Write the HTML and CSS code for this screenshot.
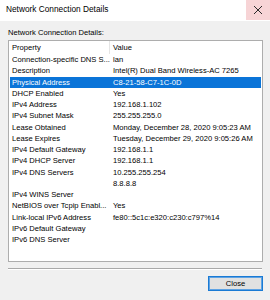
FILE: index.html
```html
<!DOCTYPE html>
<html>
<head>
<meta charset="utf-8">
<link rel="stylesheet" href="styles.css">
</head>
<body>
<div class="window">
  <div class="titlebar">
    <div class="title">Network Connection Details</div>
    <div class="close-x">
      <svg width="10" height="10" viewBox="0 0 10 10"><path d="M1 1 L9 9 M9 1 L1 9" stroke="#2b2b2b" stroke-width="1" fill="none"/></svg>
    </div>
  </div>
  <div class="content">
    <div class="label">Network Connection Details:</div>
    <div class="listbox">
      <div class="header">
        <div class="hcell first">Property</div>
        <div class="hcell">Value</div>
      </div>
      <div class="row"><div class="p">Connection-specific DNS S...</div><div class="v">lan</div></div>
      <div class="row"><div class="p">Description</div><div class="v">Intel(R) Dual Band Wireless-AC 7265</div></div>
      <div class="row selected"><div class="p">Physical Address</div><div class="v">C8-21-58-C7-1C-0D</div></div>
      <div class="row"><div class="p">DHCP Enabled</div><div class="v">Yes</div></div>
      <div class="row"><div class="p">IPv4 Address</div><div class="v">192.168.1.102</div></div>
      <div class="row"><div class="p">IPv4 Subnet Mask</div><div class="v">255.255.255.0</div></div>
      <div class="row"><div class="p">Lease Obtained</div><div class="v">Monday, December 28, 2020 9:05:23 AM</div></div>
      <div class="row"><div class="p">Lease Expires</div><div class="v">Tuesday, December 29, 2020 9:05:26 AM</div></div>
      <div class="row"><div class="p">IPv4 Default Gateway</div><div class="v">192.168.1.1</div></div>
      <div class="row"><div class="p">IPv4 DHCP Server</div><div class="v">192.168.1.1</div></div>
      <div class="row"><div class="p">IPv4 DNS Servers</div><div class="v">10.255.255.254</div></div>
      <div class="row"><div class="p"></div><div class="v">8.8.8.8</div></div>
      <div class="row"><div class="p">IPv4 WINS Server</div><div class="v"></div></div>
      <div class="row"><div class="p">NetBIOS over Tcpip Enabl...</div><div class="v">Yes</div></div>
      <div class="row"><div class="p">Link-local IPv6 Address</div><div class="v">fe80::5c1c:e320:c230:c797%14</div></div>
      <div class="row"><div class="p">IPv6 Default Gateway</div><div class="v"></div></div>
      <div class="row"><div class="p">IPv6 DNS Server</div><div class="v"></div></div>
    </div>
    <div class="separator"></div>
    <div class="actions">
      <button class="btn">Close</button>
    </div>
  </div>
</div>
</body>
</html>
```
FILE: styles.css
```css
html, body {
  margin: 0;
  padding: 0;
}
body {
  width: 270px;
  height: 300px;
  background: #f0f0f0;
  font-family: "Liberation Sans", Arial, sans-serif;
  color: #000;
  overflow: hidden;
}
.window {
  display: flex;
  flex-direction: column;
}
.titlebar {
  height: 21px;
  background: #fff;
  display: flex;
  justify-content: space-between;
  align-items: stretch;
}
.title {
  padding-left: 6px;
  font-size: 8.3px;
  line-height: 19px;
  color: #000;
}
.close-x {
  width: 24px;
  height: 20px;
  background: #f7d4d6;
  display: flex;
  align-items: center;
  justify-content: center;
}
.close-x svg {
  display: block;
  margin-top: -1px;
}
.content {
  padding: 7px 7px 0 8px;
  display: flex;
  flex-direction: column;
}
.label {
  font-size: 7.6px;
  line-height: 10px;
  height: 10px;
  margin-bottom: 2px;
}
.listbox {
  height: 220px;
  border: 1px solid #adadad;
  background: #fff;
  padding: 0 1px;
  font-size: 7.6px;
}
.header {
  display: grid;
  grid-template-columns: 100px 1fr;
  height: 13px;
  line-height: 13px;
}
.hcell {
  padding-left: 3px;
}
.hcell.first {
  padding-left: 2px;
  border-right: 1px solid #e5e5e5;
}
.row {
  display: grid;
  grid-template-columns: 100px 1fr;
  height: 11.25px;
  line-height: 11.25px;
  white-space: nowrap;
}
.row .p {
  padding-left: 2px;
  overflow: hidden;
}
.row .v {
  padding-left: 3px;
  overflow: hidden;
}
.row.selected {
  background: #0a74d8;
  color: #fff;
}
.separator {
  margin-top: 6px;
  width: 254px;
  height: 1px;
  background: #a9a9a9;
  border-bottom: 1px solid #fff;
}
.actions {
  display: flex;
  justify-content: flex-end;
  margin-top: 6px;
}
.btn {
  width: 55px;
  height: 15px;
  margin: 0;
  padding: 0;
  background: #e1e1e1;
  border: 1px solid #1a7ad4;
  box-shadow: inset 0 0 0 1px #5fa3e4;
  font-family: "Liberation Sans", Arial, sans-serif;
  font-size: 7.6px;
  color: #000;
  line-height: 13px;
}
```
